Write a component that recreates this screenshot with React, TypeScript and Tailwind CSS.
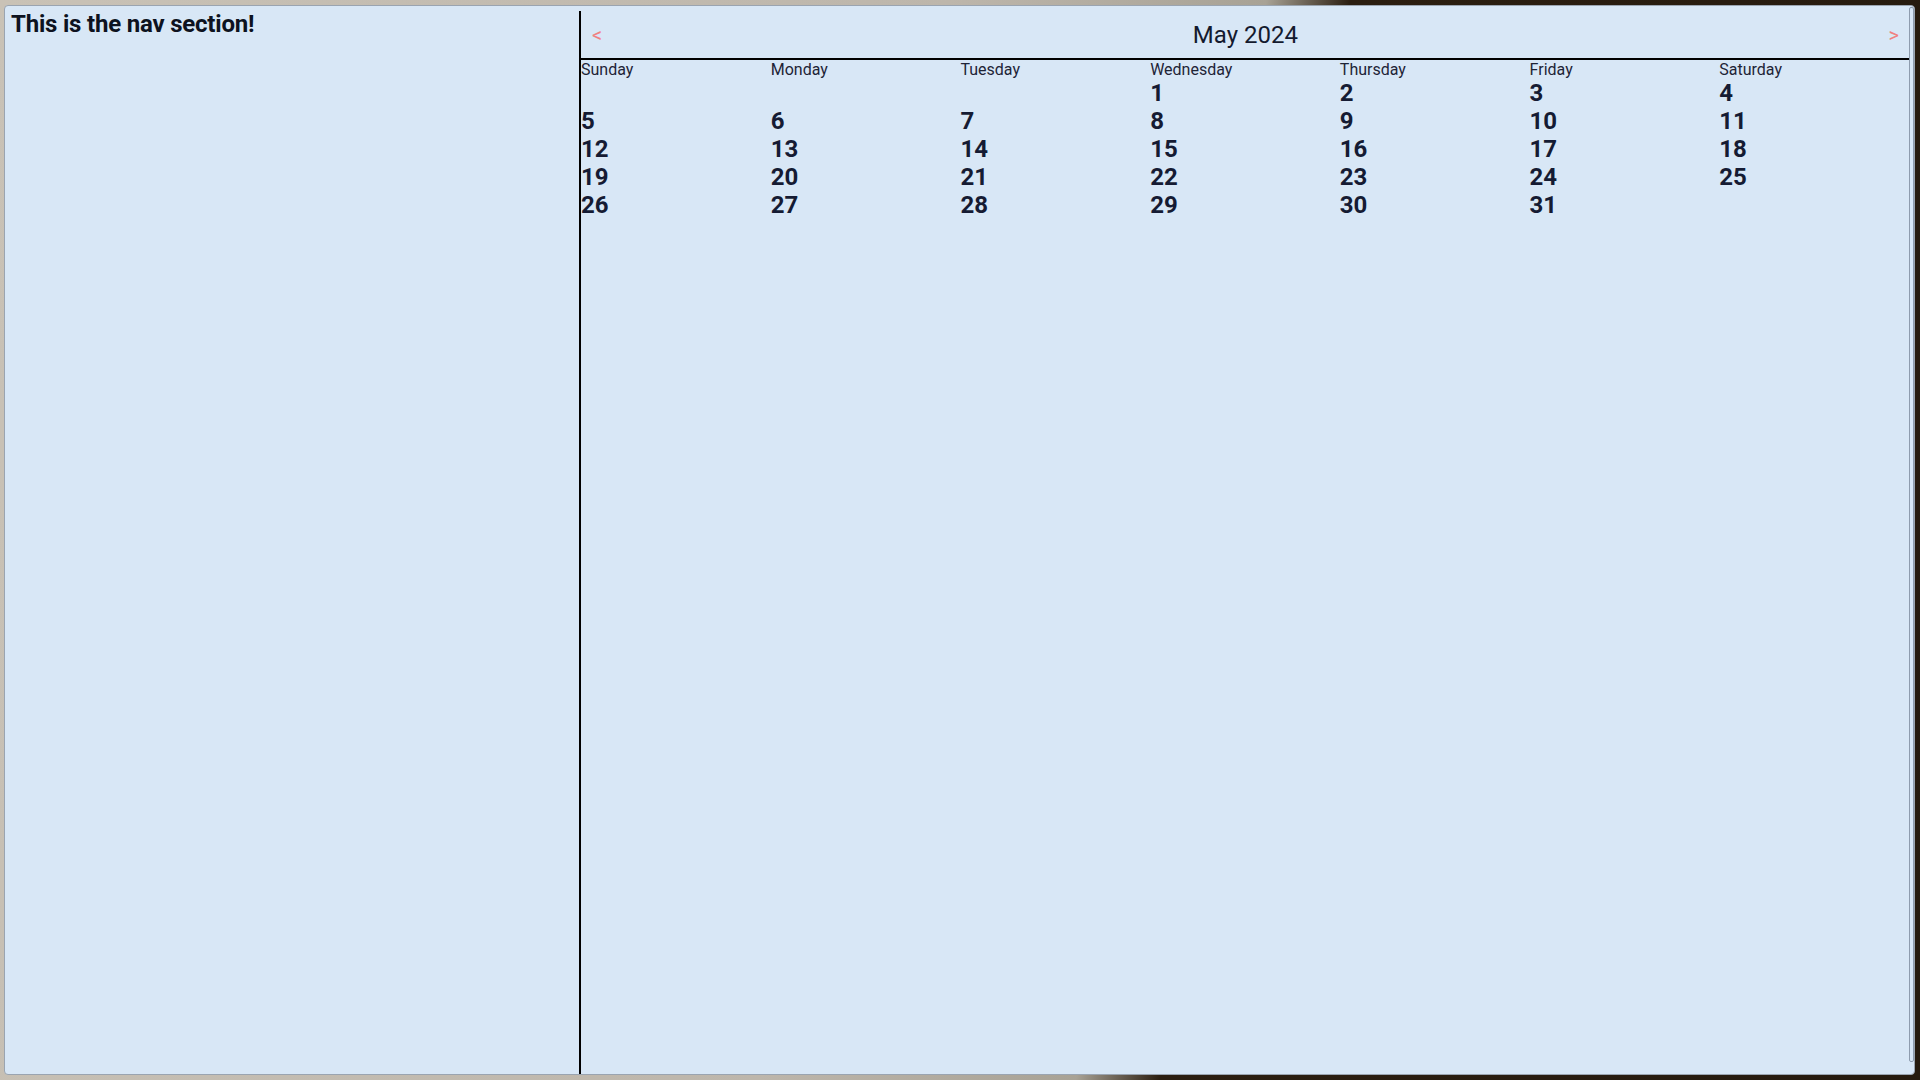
const WEEKDAYS = ["Sunday", "Monday", "Tuesday", "Wednesday", "Thursday", "Friday", "Saturday"];

function buildDays(year: number, month: number): (number | null)[] {
  const first = new Date(year, month, 1).getDay();
  const count = new Date(year, month + 1, 0).getDate();
  const cells: (number | null)[] = [];
  for (let i = 0; i < first; i++) cells.push(null);
  for (let d = 1; d <= count; d++) cells.push(d);
  return cells;
}

function Calendar() {
  const days = buildDays(2024, 4);

  return (
    <section className="flex-1 mt-[5px] border-l-2 border-black flex flex-col">
      {/* header */}
      <div className="h-[49px] flex items-center justify-between pl-[11px] pr-[10px] border-b-2 border-black">
        <button className="text-xl text-[#f08080] leading-none bg-transparent">&lt;</button>
        <h2 className="text-2xl text-[#141a2e] font-normal">May 2024</h2>
        <button className="text-xl text-[#f08080] leading-none bg-transparent">&gt;</button>
      </div>

      <div className="grid grid-cols-7">
        {WEEKDAYS.map((d) => (
          <div key={d} className="text-base leading-[19px] text-[#1e2436]">
            {d}
          </div>
        ))}
        {days.map((d, i) => (
          <div key={i} className="text-2xl leading-7 font-bold text-[#151b33] h-[28px]">
            {d ?? ""}
          </div>
        ))}
      </div>
    </section>
  );
}

export default function App() {
  return (
    <div
      className="w-[1920px] h-[1080px] flex pt-[5px] pl-[4px] pr-[5px] pb-[5px] bg-[linear-gradient(100deg,#c9c2b6_0%,#bdb6ab_45%,#a8a295_60%,#2b1e10_64%,#251a0e_100%)]"
      style={{ fontFamily: "Roboto, 'Liberation Sans', sans-serif" }}
    >
      <div className="flex-1 flex bg-[#d8e7f6] rounded-[4px] border border-[#9aa4b0] overflow-hidden">
        {/* nav */}
        <nav className="w-[574px] pl-[6px] pt-[2px]">
          <h1 className="text-2xl font-bold text-[#0d1220] tracking-[-0.2px]">This is the nav section!</h1>
        </nav>

        <Calendar />

        {/* window edge track */}
        <div className="w-[5px] pt-[1px] pb-[12px] flex">
          <div className="flex-1 border border-[#8e9cae] rounded-[2px]" />
        </div>
      </div>
    </div>
  );
}
